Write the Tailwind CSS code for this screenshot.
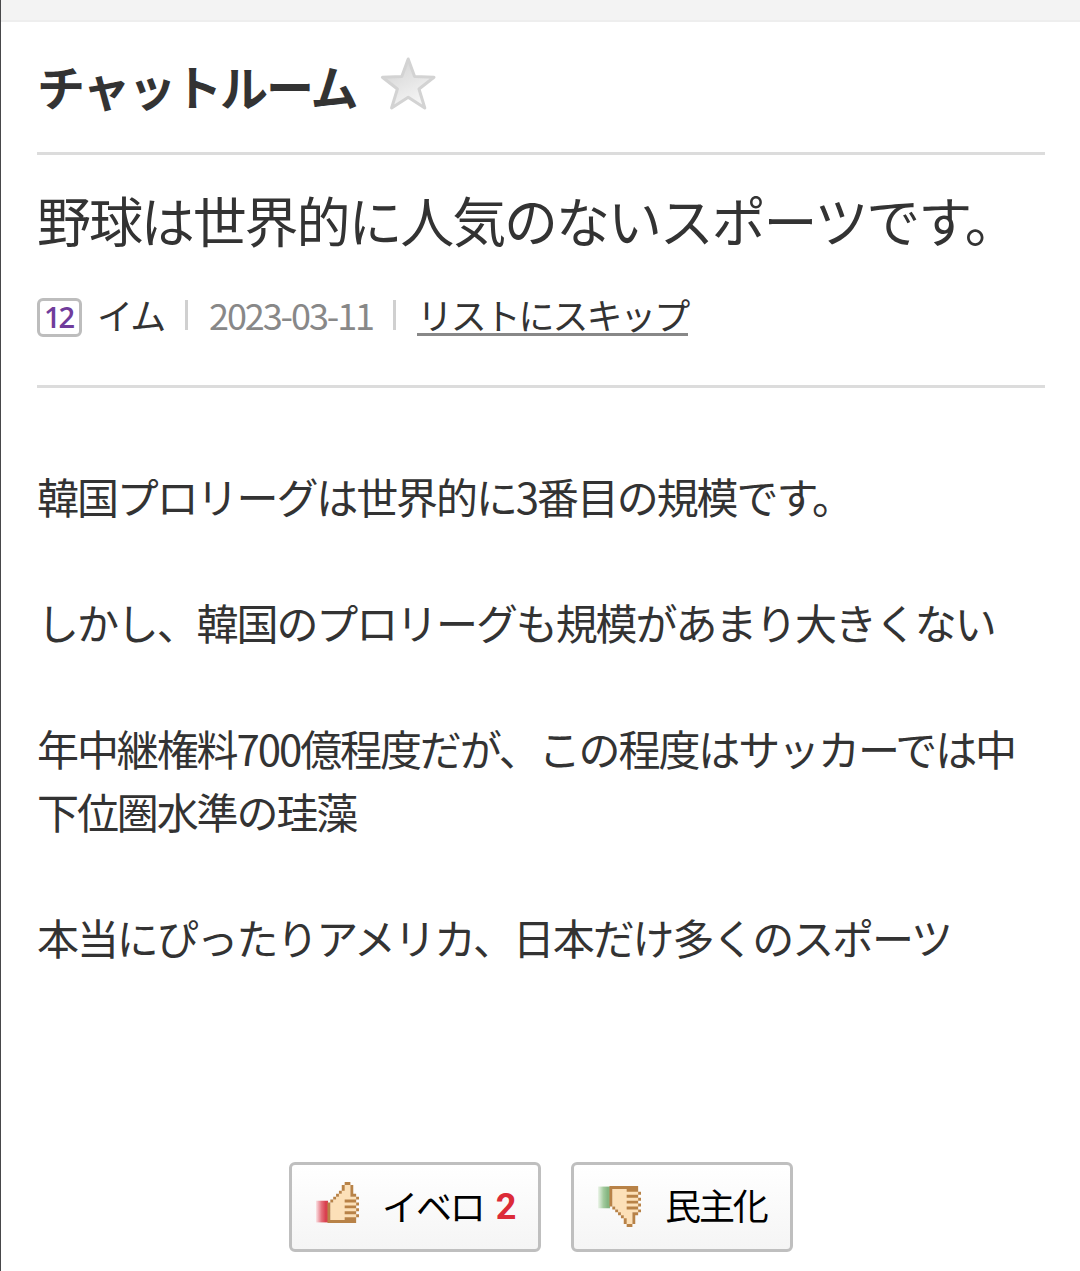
<!DOCTYPE html>
<html lang="ja">

<head>
    <meta charset="UTF-8">
    <meta name="viewport" content="width=device-width, initial-scale=1.0">
    <title>チャットルーム</title>
    <script src="https://cdn.jsdelivr.net/npm/@tailwindcss/browser@4"></script>
</head>

<body class="bg-white text-[#333] font-['Noto_Sans_CJK_JP',sans-serif] tracking-[-2.1px] h-[1271px] overflow-hidden border-l border-[#48484a]">

    <div class="h-[22px] bg-[#f3f3f3] border-b-2 border-[#eee]"></div>

    <main class="ml-9 mr-[35px]">
        <header class="flex items-center h-[133px] border-b-3 border-[#dcdcdc]">
            <h1 class="text-[48px] leading-[72px] font-bold -mt-[4px]">チャットルーム</h1>
            <svg class="w-[57px] h-[57px] ml-[24px] -mt-[7px]" viewBox="0 0 57 57">
                <defs>
                    <linearGradient id="star" x1="0.2" y1="0" x2="0.7" y2="1">
                        <stop offset="0" stop-color="#d2d2d2" />
                        <stop offset="1" stop-color="#f8f8f8" />
                    </linearGradient>
                </defs>
                <path d="M28.2 4 L34.6 21.6 L54 22.3 L39 34 L44.8 53 L28.2 42.2 L11.6 53 L17.4 34 L2.4 22.3 L21.8 21.6 Z"
                    fill="url(#star)" stroke="#d3d3d3" stroke-width="3" stroke-linejoin="round" />
            </svg>
        </header>

        <section class="h-[233px] pt-[24px] border-b-3 border-[#dcdcdc]">
            <h2 class="text-[54px] leading-[81px] whitespace-nowrap">野球は世界的に人気のないスポーツです。</h2>
            <div class="flex items-center mt-[27px] h-[54px] text-[36px] leading-[54px] whitespace-nowrap">
                <span class="flex items-center justify-center w-[45px] h-[39px] mt-[6px] pb-[1px] pr-[2px] border-3 border-[#bdbdbd] rounded-md text-[29px] leading-none font-semibold font-['Open_Sans',sans-serif] tracking-[-2px] text-[#703c9b]">12</span>
                <span class="ml-[15px]">イム</span>
                <span class="w-[3px] h-[30px] ml-[21px] mt-[2px] bg-[#d0d0d0]"></span>
                <span class="ml-[21px] text-[#888]">2023-03-11</span>
                <span class="w-[3px] h-[30px] ml-[20px] mt-[2px] bg-[#d0d0d0]"></span>
                <a href="#" class="ml-[21px] mt-[-3px] h-[47px] leading-[51px] border-b-3 border-[#888]">リストにスキップ</a>
            </div>
        </section>

        <article class="pt-[76px] h-[774px] text-[42px] leading-[63px]">
            <p class="mb-[63px]">韓国プロリーグは世界的に3番目の規模です。</p>
            <p class="mb-[63px]">しかし、韓国のプロリーグも規模があまり大きくない</p>
            <p class="mb-[63px]">年中継権料700億程度だが、この程度はサッカーでは中<br>下位圏水準の珪藻</p>
            <p>本当にぴったりアメリカ、日本だけ多くのスポーツ</p>
        </article>

        <div class="flex justify-center gap-[30px] text-[36px] leading-[54px] text-black whitespace-nowrap">
            <button type="button"
                class="flex items-center w-[252px] h-[90px] pl-[23px] border-3 border-[#bfbfbf] rounded-md bg-linear-to-b from-white to-[#f5f5f5]">
                <svg class="w-[43px] h-[41px] ml-[1px] -mt-[9px]" viewBox="0 0 15 14" preserveAspectRatio="none">
                    <defs>
                        <linearGradient id="red">
                            <stop offset="0" stop-color="#fae3e5" />
                            <stop offset="0.45" stop-color="#e5717d" />
                            <stop offset="0.8" stop-color="#d9404f" />
                        </linearGradient>
                    </defs>
                    <rect x="0" y="6.4" width="4.2" height="7.4" fill="url(#red)" />
                    <path d="M5 7h1V6h1V5h1V4h1V1h3v4h2v8H5z" fill="#fce0b8" />
                    <path d="M10 .5h2M9 1.5h1M12 1.5h1M9 2.5h1M12 2.5h1M8 3.5h1M12 3.5h1M7 4.5h1M12 4.5h2M6 5.5h1M14 5.5h1M5 6.5h1M10 6.5h4M4 7.5h1M14 7.5h1M4 8.5h1M10 8.5h4M4 9.5h1M14 9.5h1M4 10.5h1M10 10.5h4M4 11.5h1M14 11.5h1M4 12.5h1M10 12.5h4M4 13.5h10"
                        stroke="#b88247" stroke-width="1" fill="none" />
                </svg>
                <span class="ml-[23px] -mt-[5px]">イベロ</span>
                <span class="ml-[12px] font-bold font-[Roboto,sans-serif] text-[#dc2b38]">2</span>
            </button>
            <button type="button"
                class="flex items-center w-[222px] h-[90px] pl-[23px] border-3 border-[#bfbfbf] rounded-md bg-linear-to-b from-white to-[#f5f5f5]">
                <svg class="w-[43px] h-[41px] ml-[1px] -mt-[1px]" viewBox="0 0 15 14" preserveAspectRatio="none">
                    <defs>
                        <linearGradient id="green">
                            <stop offset="0" stop-color="#edf5ea" />
                            <stop offset="0.45" stop-color="#a3cb9e" />
                            <stop offset="0.8" stop-color="#85b581" />
                        </linearGradient>
                    </defs>
                    <g transform="translate(0 14) scale(1 -1)">
                        <rect x="0" y="6.4" width="4.2" height="7.4" fill="url(#green)" />
                        <path d="M5 7h1V6h1V5h1V4h1V1h3v4h2v8H5z" fill="#fce0b8" />
                        <path d="M10 .5h2M9 1.5h1M12 1.5h1M9 2.5h1M12 2.5h1M8 3.5h1M12 3.5h1M7 4.5h1M12 4.5h2M6 5.5h1M14 5.5h1M5 6.5h1M10 6.5h4M4 7.5h1M14 7.5h1M4 8.5h1M10 8.5h4M4 9.5h1M14 9.5h1M4 10.5h1M10 10.5h4M4 11.5h1M14 11.5h1M4 12.5h1M10 12.5h4M4 13.5h10"
                            stroke="#b88247" stroke-width="1" fill="none" />
                    </g>
                </svg>
                <span class="ml-[24px] -mt-[6px]">民主化</span>
            </button>
        </div>
    </main>

</body>

</html>
